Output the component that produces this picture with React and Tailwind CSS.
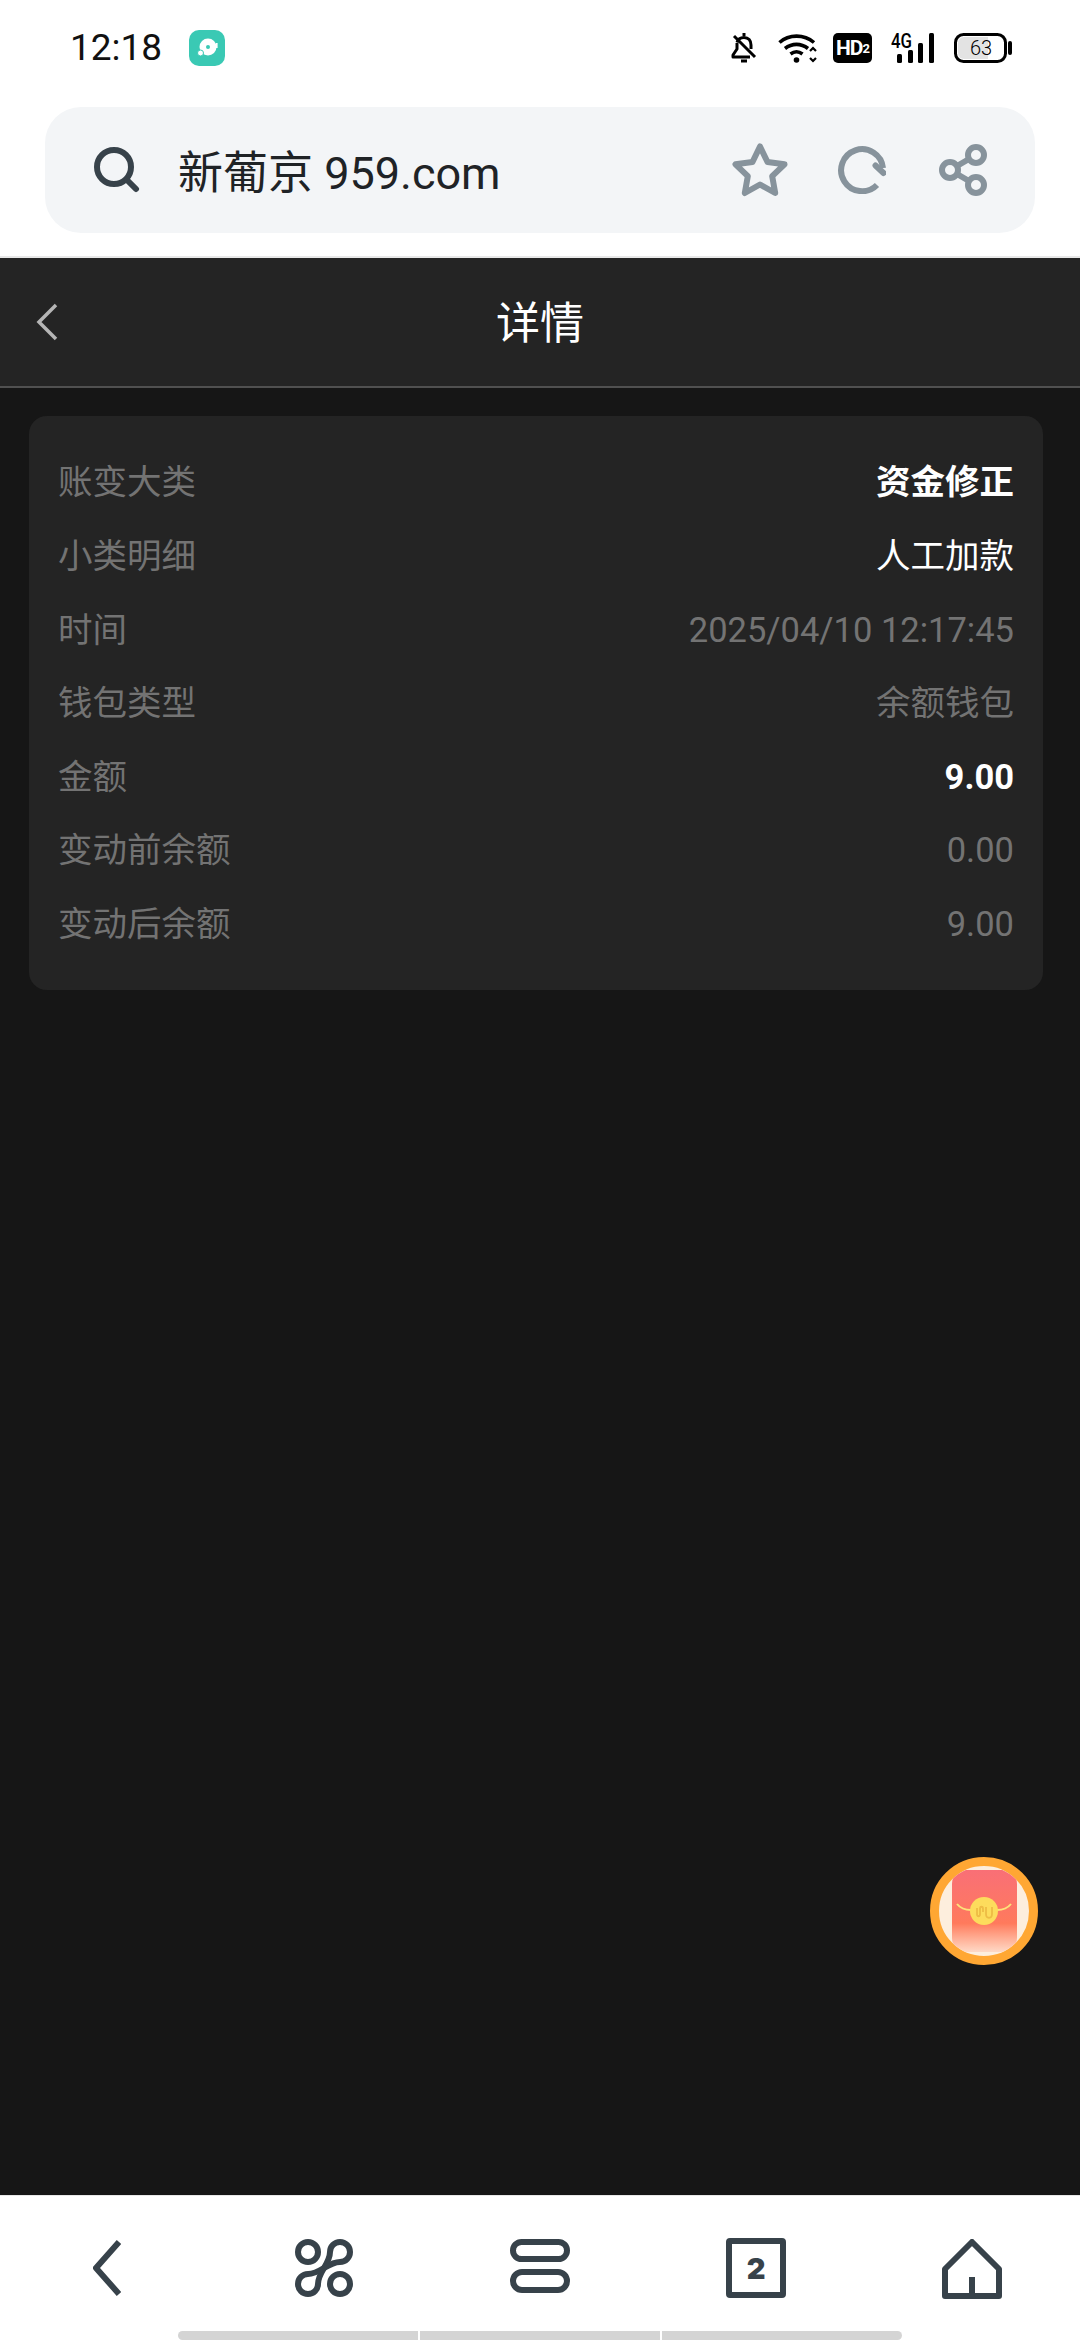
import React from 'react';

const font = 'font-[Roboto,"Noto_Sans_CJK_SC",sans-serif]';

const rows = [
  { label: '账变大类', value: '资金修正', tone: 'text-white font-bold' },
  { label: '小类明细', value: '人工加款', tone: 'text-white' },
  { label: '时间', value: '2025/04/10 12:17:45', tone: 'text-[#737373]' },
  { label: '钱包类型', value: '余额钱包', tone: 'text-[#737373]' },
  { label: '金额', value: '9.00', tone: 'text-white font-bold' },
  { label: '变动前余额', value: '0.00', tone: 'text-[#737373]' },
  { label: '变动后余额', value: '9.00', tone: 'text-[#737373]' }
];

const BellOffIcon = () => (
  <svg width="26" height="30" viewBox="0 0 26 30" fill="none" stroke="#000" strokeWidth="3">
    <path d="M6 9.5C7 6 9.5 4.5 13 4.5c4.5 0 7 3 7 7.5v4" />
    <path d="M6 10v6l-4 6v2h17" strokeLinejoin="round" />
    <path d="M3 3l21 21" />
    <path d="M13 0v3" />
    <path d="M10 28h6" />
  </svg>
);

const WifiIcon = () => (
  <svg width="40" height="30" viewBox="0 0 40 30" fill="none" stroke="#000" strokeWidth="3.6">
    <path d="M1.5 9.5C11 1 26 1 36 9.5" />
    <path d="M7 15.5c7-5.5 16-5.5 23 0" />
    <path d="M12.5 21c4-3 8-3 12 0" />
    <circle cx="18.5" cy="27" r="2.8" fill="#000" stroke="none" />
    <path d="M32 18l3-3 3 3M32 25l3 3 3-3" strokeWidth="2.2" />
  </svg>
);

// taller viewBox leaves room above the 4G label
const SignalIcon = () => (
  <svg className="-mt-[6px]" width="44" height="36" viewBox="0 -6 44 36">
    <text x="0" y="15" fontFamily="Roboto" fontWeight="500" fontSize="20" textLength="21" lengthAdjust="spacingAndGlyphs">4G</text>
    <rect x="6" y="21" width="5" height="9" rx="1.5" />
    <rect x="17" y="17" width="5" height="13" rx="1.5" />
    <rect x="27" y="10" width="5" height="20" rx="1.5" />
    <rect x="38" y="0" width="5" height="30" rx="1.5" />
  </svg>
);

const BatteryIcon = () => (
  <svg width="58" height="30" viewBox="0 0 58 30">
    <rect x="1.5" y="1.5" width="50" height="27" rx="8" fill="#fff" stroke="#000" strokeWidth="3" />
    <path d="M10 4h24v22H10a6 6 0 0 1-6-6V10a6 6 0 0 1 6-6z" fill="#e3e3e3" />
    <text x="27" y="22" textAnchor="middle" fontFamily="Roboto" fontWeight="300" fontSize="20">63</text>
    <rect x="54" y="8" width="4" height="14" rx="2" />
  </svg>
);

const StatusBar = () => (
  <div className="flex h-[107px] items-start pl-[70px] pr-[68px] pt-[33px]">
    <span className="w-[119px] text-[37px] font-normal leading-[30px] text-[#111]">12:18</span>
    <div className="flex h-[36px] w-[36px] -translate-y-[3px] items-center justify-center rounded-[10px] bg-[#3ac9b4]">
      <svg width="24" height="24" viewBox="0 0 24 24">
        <circle cx="13" cy="11" r="8.5" fill="#fff" />
        <circle cx="13" cy="11" r="2" fill="#3ac9b4" />
        <circle cx="5.5" cy="17" r="3" fill="#fff" stroke="#3ac9b4" strokeWidth="1" />
        <rect x="21" y="7" width="1.6" height="5" fill="#fff" />
      </svg>
    </div>
    <div className="ml-auto flex h-[30px] items-center">
      <BellOffIcon />
      <div className="ml-[21px]"><WifiIcon /></div>
      <div className="ml-[15px] flex h-[30px] w-[39px] items-center justify-center rounded-[5px] bg-black text-[21px] font-bold leading-none tracking-[-1px] text-white">
        HD<span className="text-[13px]">2</span>
      </div>
      <div className="ml-[19px]"><SignalIcon /></div>
      <div className="ml-[19px]"><BatteryIcon /></div>
    </div>
  </div>
);

const UrlBar = () => (
  <div className="mx-[45px] flex h-[126px] items-center rounded-[36px] bg-[#f3f5f7]">
    <svg className="ml-[49px]" width="46" height="46" viewBox="0 0 46 46" fill="none" stroke="#37424a" strokeWidth="6" strokeLinecap="round">
      <circle cx="20" cy="20" r="17" />
      <path d="M33 33l9 9" />
    </svg>
    <span className="ml-[38px] pt-[6px] text-[45px] leading-none text-[#1f2326]">新葡京 959.com</span>
    <div className="ml-auto flex items-center pr-[48px]">
      <svg width="56" height="54" viewBox="0 0 56 54" fill="none" stroke="#87939c" strokeWidth="6" strokeLinejoin="round">
        <path d="M28 3.5l7.5 15.5 17 2.3-12.3 11.900 3 16.800L28 41.500l-15.200 8.500 3-16.800L3.500 21.300l17-2.300z" />
      </svg>
      <svg className="ml-[50px]" width="48" height="48" viewBox="0 0 48 48" fill="none" stroke="#87939c" strokeWidth="6">
        <path d="M39 39A21 21 0 1 1 45 22" />
        <path d="M45.500 27L37.500 19.500" strokeLinecap="round" />
      </svg>
      <svg className="ml-[53px]" width="48" height="52" viewBox="0 0 48 52" fill="none" stroke="#87939c" strokeWidth="6">
        <circle cx="11" cy="26" r="8" />
        <circle cx="37" cy="11" r="8" />
        <circle cx="37" cy="41" r="8" />
        <path d="M18 22l12-7M18 30l12 7" />
      </svg>
    </div>
  </div>
);

const DetailRow = ({ label, value, tone }) => (
  <div className="flex h-[73.6px] items-center justify-between text-[34.5px]">
    <span className="text-[#737373]">{label}</span>
    <span className={tone}>{value}</span>
  </div>
);

const RedPacket = () => (
  <button type="button" className="absolute bottom-[375px] right-[42px] flex h-[108px] w-[108px] items-center justify-center overflow-hidden rounded-full border-[9px] border-[#ffa733] bg-[#fdeedd]">
    <div className="relative flex h-[82px] w-[65px] items-center justify-center rounded-[14px] bg-linear-to-b from-[#f96f76] via-[#ff7a5c] via-65% to-[#fdd9c6]">
      <svg className="overflow-visible" width="30" height="30" viewBox="0 0 30 30" fill="none">
        <path d="M-12 8c4 5 9 6 14 6M42 8c-4 5-9 6-14 6" stroke="#fde27a" strokeWidth="2" />
        <circle cx="15" cy="15" r="14" fill="#fddc5c" />
        <path d="M8 12v6c0 3 3 3 3 0v-5c0-3 3-3 3 0v3M17 11v7c0 5 6 5 6 0v-7" stroke="#eebc45" strokeWidth="1.800" />
      </svg>
    </div>
  </button>
);

const BottomNav = () => (
  <footer className="flex h-[145px] flex-col border-t border-[#e8e8e8] bg-white">
    <div className="flex h-[135px] items-start pt-[43px]">
      <svg className="ml-[93px]" width="28" height="58" viewBox="0 0 28 58" fill="none" stroke="#37424a" strokeWidth="6" strokeLinejoin="round">
        <path d="M26 3L3 29l23 26" />
      </svg>
      <svg className="ml-[174px]" width="58" height="58" viewBox="0 0 58 58" fill="none" stroke="#37424a" strokeWidth="6">
        <circle cx="13" cy="13" r="10" />
        <circle cx="45" cy="45" r="10" />
        <path d="M35 13A10 10 0 1 1 45 23" />
        <path d="M23 45A10 10 0 1 1 13 35" />
        <path d="M35 13C35 25 23 33 23 45" />
        <path d="M45 23C33 23 25 35 13 35" />
      </svg>
      <svg className="ml-[157px]" width="60" height="54" viewBox="0 0 60 54" fill="none" stroke="#37424a" strokeWidth="6">
        <rect x="3" y="3" width="54" height="17" rx="8.5" />
        <rect x="3" y="33" width="54" height="18" rx="9" />
      </svg>
      <div className="ml-[156px] flex h-[60px] w-[60px] -translate-y-[1px] items-center justify-center rounded-[4px] border-[6px] border-[#37424a] font-[Inter] text-[29px] font-black leading-none text-[#37424a]">
        2
      </div>
      <svg className="ml-[156px]" width="60" height="60" viewBox="0 0 60 60" fill="none" stroke="#37424a" strokeWidth="6" strokeLinejoin="round">
        <path d="M30 3L3 30v27h54V30z" />
        <path d="M30 38v19" />
      </svg>
    </div>
    <div className="mx-[178px] flex h-[9px] gap-[2px] overflow-hidden rounded-full">
      <div className="flex-1 bg-[#d4d4d4]" />
      <div className="flex-1 bg-[#d4d4d4]" />
      <div className="flex-1 bg-[#d4d4d4]" />
    </div>
  </footer>
);

export default function App() {
  return (
    <div className={`${font} relative flex h-[2340px] w-[1080px] flex-col overflow-hidden bg-white`}>
      <div className="h-[258px] border-b-2 border-[#e8e8e8]">
        <StatusBar />
        <UrlBar />
      </div>

      <main className="flex-1 bg-[#161616]">
        <header className="grid h-[130px] grid-cols-[1fr_auto_1fr] items-center border-b-2 border-[#505050] bg-[#242424] pl-[36px]">
          <svg width="22" height="38" viewBox="0 0 22 38" fill="none" stroke="#b5b5b5" strokeWidth="3.5">
            <path d="M20 2L3 19l17 17" />
          </svg>
          <h1 className="-ml-[36px] pt-[4px] text-[44px] font-normal leading-none text-white">详情</h1>
        </header>

        <section className="ml-[29px] mr-[37px] mt-[28px] rounded-[18px] bg-[#242424] px-[29px] pb-[28.5px] pt-[30.5px]">
          {rows.map((row) => (
            <DetailRow key={row.label} {...row} />
          ))}
        </section>
      </main>

      <RedPacket />
      <BottomNav />
    </div>
  );
}
